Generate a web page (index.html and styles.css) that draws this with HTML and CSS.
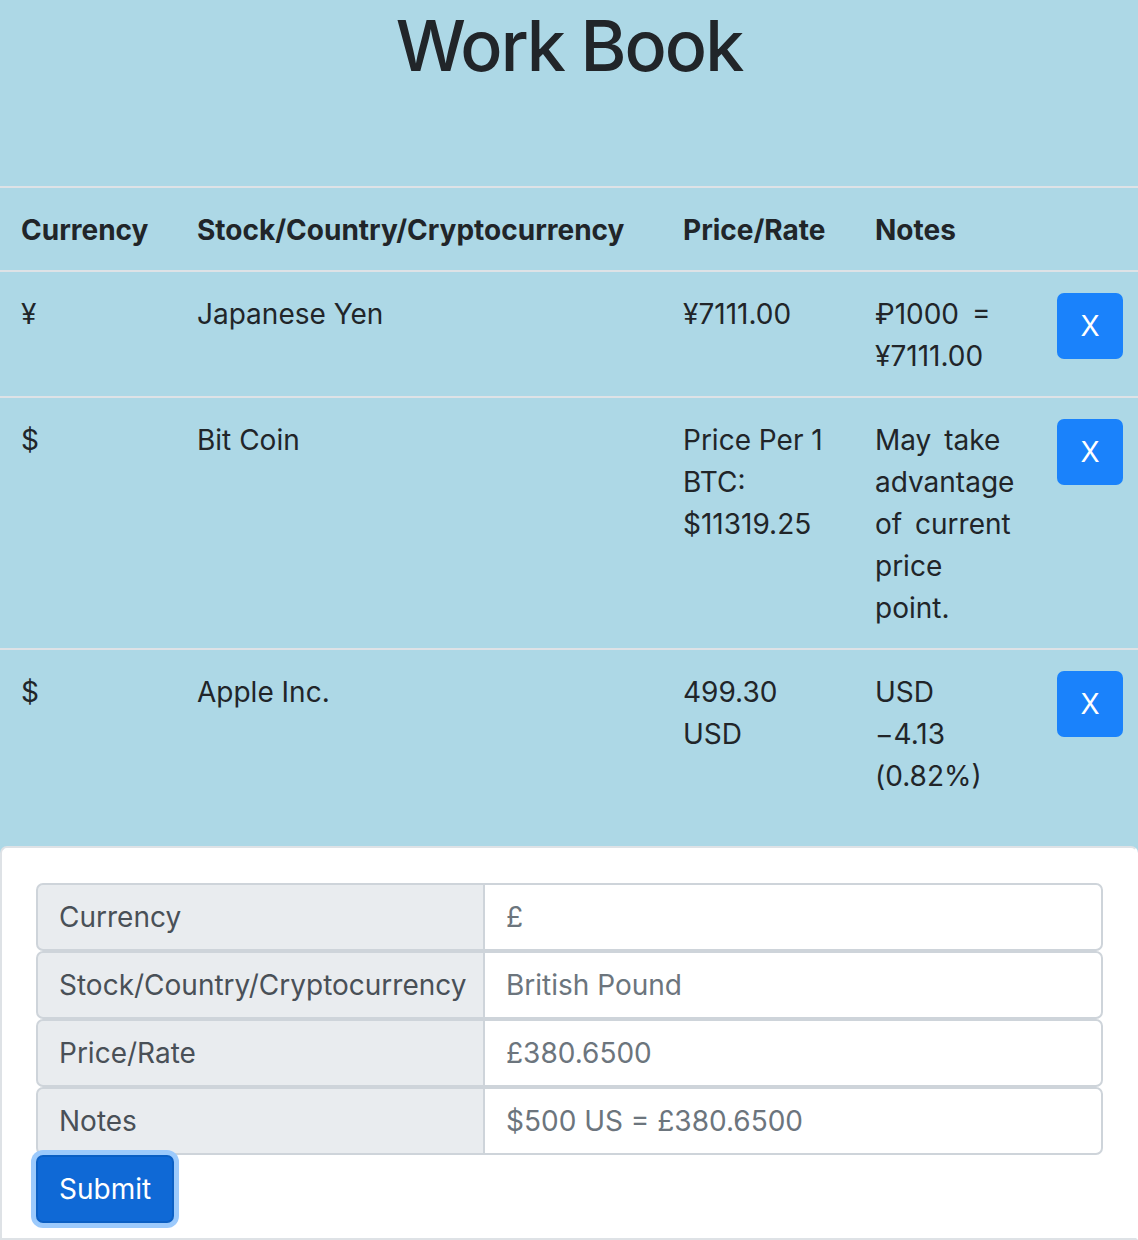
FILE: index.html
```html
<!DOCTYPE html>
<html lang="en">
<head>
<meta charset="utf-8">
<title>Work Book</title>
<link rel="stylesheet" href="styles.css">
</head>
<body>
<main class="page">
  <h1 class="title">Work Book</h1>
  <table class="book">
    <colgroup>
      <col class="c-cur"><col class="c-name"><col class="c-price"><col class="c-notes"><col class="c-act">
    </colgroup>
    <thead>
      <tr>
        <th>Currency</th>
        <th>Stock/Country/Cryptocurrency</th>
        <th>Price/Rate</th>
        <th>Notes</th>
        <th></th>
      </tr>
    </thead>
    <tbody>
      <tr>
        <td>¥</td>
        <td>Japanese Yen</td>
        <td>¥7111.00</td>
        <td class="notes">₽1000 = ¥7111.00</td>
        <td><button class="btn-x" type="button">X</button></td>
      </tr>
      <tr>
        <td>$</td>
        <td>Bit Coin</td>
        <td>Price Per 1 BTC: $11319.25</td>
        <td class="notes">May take advantage of current price point.</td>
        <td><button class="btn-x" type="button">X</button></td>
      </tr>
      <tr>
        <td>$</td>
        <td>Apple Inc.</td>
        <td>499.30 USD</td>
        <td class="notes">USD −4.13 (0.82%)</td>
        <td><button class="btn-x" type="button">X</button></td>
      </tr>
    </tbody>
  </table>
  <section class="card">
    <form class="entry">
      <div class="group">
        <span class="group-label">Currency</span>
        <input class="group-input" type="text" placeholder="£">
      </div>
      <div class="group">
        <span class="group-label">Stock/Country/Cryptocurrency</span>
        <input class="group-input" type="text" placeholder="British Pound">
      </div>
      <div class="group">
        <span class="group-label">Price/Rate</span>
        <input class="group-input" type="text" placeholder="£380.6500">
      </div>
      <div class="group">
        <span class="group-label">Notes</span>
        <input class="group-input" type="text" placeholder="$500 US = £380.6500">
      </div>
      <button class="btn-submit" type="button">Submit</button>
    </form>
  </section>
</main>
</body>
</html>
```

FILE: styles.css
```css
* { box-sizing: border-box; }

html, body {
  margin: 0;
  padding: 0;
}

body {
  background: #add8e6;
  color: #212529;
  font-family: Inter, "Noto Sans", "Liberation Sans", sans-serif;
  font-size: 28px;
  line-height: 42px;
}

.page {
  width: 1138px;
  height: 1240px;
  overflow: hidden;
}

.title {
  margin: 0 0 98px;
  padding-top: 4px;
  text-align: center;
  font-size: 70px;
  font-weight: 500;
  line-height: 84px;
  letter-spacing: -2px;
}

.book {
  width: 100%;
  table-layout: fixed;
  border-collapse: collapse;
  margin-bottom: 30px;
}

.c-cur { width: 176px; }
.c-name { width: 486px; }
.c-price { width: 192px; }
.c-notes { width: 182px; }
.c-act { width: 102px; }

.book th,
.book td {
  padding: 21px 21px 19px;
  vertical-align: top;
  text-align: left;
  border-top: 2px solid #dee2e6;
}

.book th {
  font-weight: 700;
  border-bottom: 2px solid #dee2e6;
}

.book td.notes {
  word-spacing: 5px;
}

.book td:last-child {
  padding-right: 0;
}

.btn-x {
  width: 66px;
  height: 66px;
  padding: 0;
  border: 0;
  border-radius: 7px;
  background: #1a82fb;
  color: #fff;
  font: inherit;
  line-height: 66px;
}

.card {
  background: #fff;
  border: 2px solid #dee2e6;
  border-right-color: transparent;
  border-radius: 7px 7px 0 0;
  padding: 35px 33px 14px 34px;
  height: 394px;
}

.entry {
  display: flex;
  flex-direction: column;
  align-items: flex-start;
}

.group {
  display: flex;
  width: 100%;
  height: 68px;
}

.group-label {
  width: 449px;
  flex: none;
  padding: 11px 21px;
  background: #e9ecef;
  border: 2px solid #ced4da;
  border-radius: 7px 0 0 7px;
  color: #495057;
  white-space: nowrap;
}

.group-input {
  flex: 1;
  min-width: 0;
  margin-left: -2px;
  padding: 11px 21px;
  border: 2px solid #ced4da;
  border-radius: 0 7px 7px 0;
  background: #fff;
  color: #495057;
  font: inherit;
  line-height: 42px;
  outline: none;
}

.group-input::placeholder {
  color: #6c757d;
  opacity: 1;
}

.btn-submit {
  height: 68px;
  padding: 11px 21px;
  border: 2px solid #0a5fc4;
  border-radius: 7px;
  background: #0f69d6;
  color: #fff;
  font: inherit;
  line-height: 42px;
  box-shadow: 0 0 0 5px #9ccafc;
}
```
